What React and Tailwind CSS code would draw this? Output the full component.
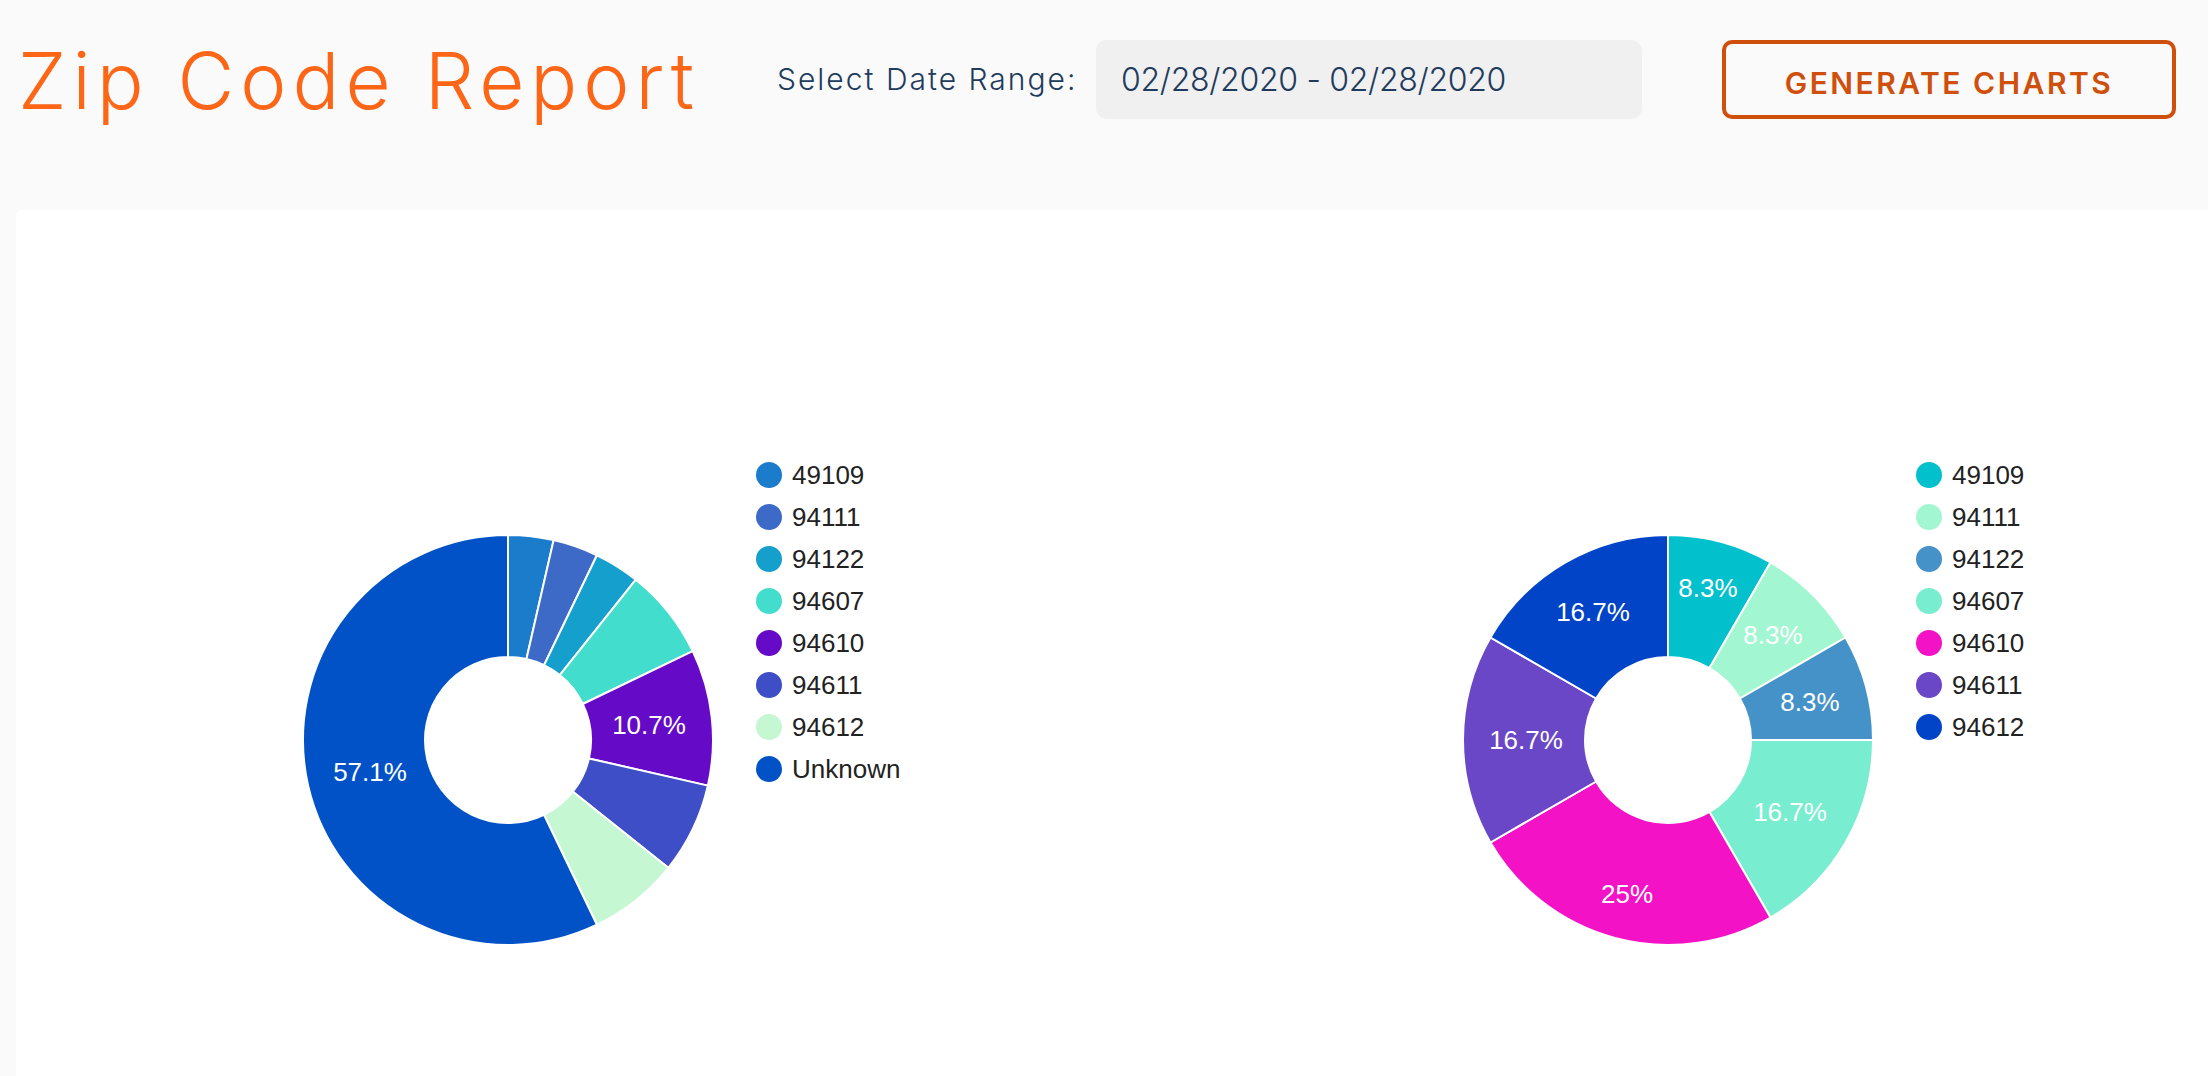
import React from 'react';

// pie data: colour hex for the svg slice, full class for the legend dot
const leftSlices = [
  { zip: '49109', value: 1, hex: '#1a7ccb', dot: 'bg-[#1a7ccb]' },
  { zip: '94111', value: 1, hex: '#3d69c7', dot: 'bg-[#3d69c7]' },
  { zip: '94122', value: 1, hex: '#159fcc', dot: 'bg-[#159fcc]' },
  { zip: '94607', value: 2, hex: '#43ddcd', dot: 'bg-[#43ddcd]' },
  { zip: '94610', value: 3, hex: '#650ac7', dot: 'bg-[#650ac7]', label: '10.7%', lx: 141, ly: -15 },
  { zip: '94611', value: 2, hex: '#3d4ec7', dot: 'bg-[#3d4ec7]' },
  { zip: '94612', value: 2, hex: '#c6f7d3', dot: 'bg-[#c6f7d3]' },
  { zip: 'Unknown', value: 16, hex: '#0252c7', dot: 'bg-[#0252c7]', label: '57.1%', lx: -138, ly: 32 },
];

const rightSlices = [
  { zip: '49109', value: 1, hex: '#03c1cc', dot: 'bg-[#03c1cc]', label: '8.3%', lx: 40, ly: -152 },
  { zip: '94111', value: 1, hex: '#a3f6d2', dot: 'bg-[#a3f6d2]', label: '8.3%', lx: 105, ly: -105 },
  { zip: '94122', value: 1, hex: '#4592c9', dot: 'bg-[#4592c9]', label: '8.3%', lx: 142, ly: -38 },
  { zip: '94607', value: 2, hex: '#79edcf', dot: 'bg-[#79edcf]', label: '16.7%', lx: 122, ly: 72 },
  { zip: '94610', value: 3, hex: '#f312c6', dot: 'bg-[#f312c6]', label: '25%', lx: -41, ly: 154 },
  { zip: '94611', value: 2, hex: '#6a47c6', dot: 'bg-[#6a47c6]', label: '16.7%', lx: -142, ly: 0 },
  { zip: '94612', value: 2, hex: '#0244c8', dot: 'bg-[#0244c8]', label: '16.7%', lx: -75, ly: -128 },
];

const C = 210;
const R_OUT = 205;
const R_IN = 83;

const pt = (r, a) => [C + r * Math.sin(a), C - r * Math.cos(a)];

function slicePath(a0, a1) {
  const large = a1 - a0 > Math.PI ? 1 : 0;
  const [x0, y0] = pt(R_OUT, a0);
  const [x1, y1] = pt(R_OUT, a1);
  const [x2, y2] = pt(R_IN, a1);
  const [x3, y3] = pt(R_IN, a0);
  return `M${x0} ${y0} A${R_OUT} ${R_OUT} 0 ${large} 1 ${x1} ${y1} L${x2} ${y2} A${R_IN} ${R_IN} 0 ${large} 0 ${x3} ${y3} Z`;
}

const DonutChart = ({ slices }) => {
  const total = slices.reduce((sum, s) => sum + s.value, 0);
  let angle = 0;
  const arcs = slices.map((s) => {
    const a0 = angle;
    angle += (s.value / total) * Math.PI * 2;
    return { ...s, d: slicePath(a0, angle) };
  });

  return (
    <div className="flex items-start gap-[38px]">
      <svg width="420" height="420" viewBox="0 0 420 420" className="mt-[76px] shrink-0">
        {arcs.map((s) => (
          <path key={s.zip} d={s.d} fill={s.hex} stroke="#ffffff" strokeWidth="2" strokeLinejoin="round" />
        ))}
        {arcs
          .filter((s) => s.label)
          .map((s) => (
            <text
              key={s.zip + '-label'}
              x={C + s.lx}
              y={C + s.ly}
              dy="0.35em"
              textAnchor="middle"
              fill="#ffffff"
              fontSize="26"
              fontFamily="'Liberation Sans', Arial, sans-serif"
            >
              {s.label}
            </text>
          ))}
      </svg>

      <ul className="flex flex-col">
        {slices.map((s) => (
          <li key={s.zip} className="h-[42px] flex items-center gap-[10px]">
            <span className={`w-[26px] h-[26px] rounded-full shrink-0 ${s.dot}`} />
            <span className="text-[26px] leading-none text-[#222222] font-['Liberation_Sans',Arial,sans-serif]">{s.zip}</span>
          </li>
        ))}
      </ul>
    </div>
  );
};

function App() {
  return (
    <div className="min-h-screen bg-[#fafafa] font-['Inter',sans-serif]">
      {/* header */}
      <div className="flex items-start h-[210px] pl-[18px]">
        <h1 className="w-[759px] shrink-0 mt-[42px] text-[78px] leading-none font-light tracking-[6px] text-[#fd6617]">
          Zip Code Report
        </h1>
        <div className="w-[319px] shrink-0 mt-[64px] text-[30px] leading-none font-light tracking-[2px] text-[#213b5d]">
          Select Date Range:
        </div>
        <div className="w-[546px] h-[79px] shrink-0 mt-[40px] rounded-[11px] bg-[#f0f0f0] flex items-center pl-[25px] text-[32px] font-light tracking-[-0.3px] text-[#213b5d]">
          02/28/2020 - 02/28/2020
        </div>
        <button
          type="button"
          className="ml-[80px] mt-[40px] w-[454px] h-[79px] shrink-0 rounded-[10px] border-[4px] border-[#cf4f0c] bg-transparent flex items-center justify-center pt-[7px] text-[30px] font-semibold tracking-[2.5px] text-[#cf4f0c]"
        >
          GENERATE CHARTS
        </button>
      </div>

      {/* charts panel */}
      <div className="ml-[16px] min-h-[866px] rounded-tl-[6px] bg-white pt-[244px] pl-[282px]">
        <div className="grid grid-cols-[1160px_auto]">
          <DonutChart slices={leftSlices} />
          <DonutChart slices={rightSlices} />
        </div>
      </div>
    </div>
  );
}

export default App;
